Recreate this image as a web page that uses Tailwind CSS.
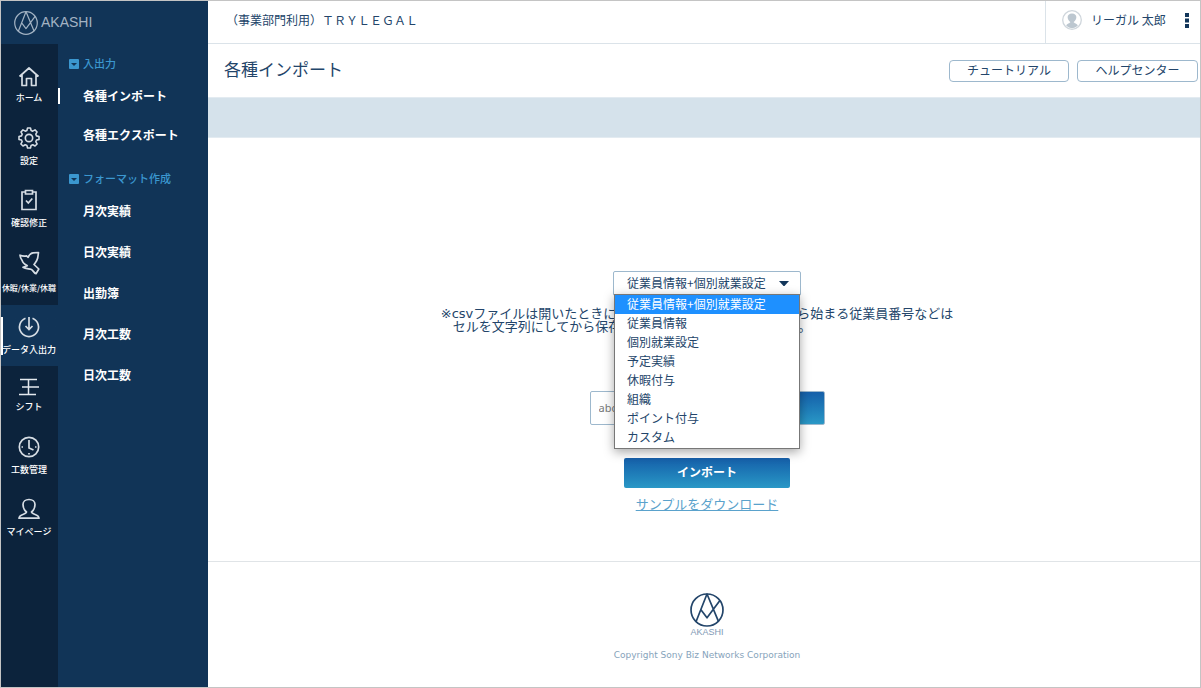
<!DOCTYPE html>
<html lang="ja">
<head>
<meta charset="utf-8">
<meta name="viewport" content="width=device-width, initial-scale=1">
<title>各種インポート - AKASHI</title>
<script src="https://cdn.jsdelivr.net/npm/@tailwindcss/browser@4"></script>
</head>
<body class="min-h-screen flex border border-[#c4c4c4] bg-white font-['Noto_Sans_CJK_JP',sans-serif] text-xs text-[#23456a]">
<svg class="hidden" aria-hidden="true">
  <symbol id="mark" viewBox="0 0 100 100">
    <g fill="none" stroke="currentColor" stroke-width="5" stroke-linejoin="round"><circle cx="50" cy="50" r="47"/><path d="M18 84 50 3l34 81M31 48l19 25 38-51"/></g>
  </symbol>
  <symbol id="caret" viewBox="0 0 10 10"><rect width="10" height="10" rx="1" fill="#3b97cf"/><path d="M2 4h6L5 7z" fill="#113457"/></symbol>
</svg>

<aside class="w-[207px] shrink-0 flex flex-col bg-[#113457] text-white">
  <a href="#" class="h-[43px] pl-[13px] flex items-center gap-[3px] text-[#a3b3c3]">
    <svg class="size-6"><use href="#mark"/></svg>
    <span class="pb-[2px] font-['Liberation_Sans',sans-serif] text-sm">AKASHI</span>
  </a>
  <div class="flex-1 flex">
    <nav aria-label="メイン" class="w-[57px] shrink-0 bg-[#0c233c] pt-[10px] pr-px flex flex-col text-[9px] font-medium leading-[12px] whitespace-nowrap text-center">
      <a href="#" class="h-[61px] pt-3 flex flex-col items-center gap-[4px]">
        <svg class="size-[22px] shrink-0" viewBox="0 0 22 22" fill="none" stroke="#d6dde4" stroke-width="1.700" stroke-linejoin="round"><path d="M1.500 10.500 11 2l9.500 8.500M4 9v10.500h4.500v-7h5v7H18V9"/></svg>ホーム</a>
      <a href="#" class="h-[62px] pt-3 flex flex-col items-center gap-[6px]">
        <svg class="size-[22px] shrink-0" viewBox="0 0 24 24" fill="none" stroke="#d6dde4" stroke-width="1.800" stroke-linejoin="round"><circle cx="12" cy="12" r="4"/><path d="M10.300 1.500h3.400l.7 2.900 1.900.8 2.600-1.500 2.400 2.400-1.500 2.600.8 1.900 2.900.7v3.400l-2.900.7-.8 1.900 1.500 2.600-2.400 2.400-2.600-1.500-1.900.8-.7 2.900h-3.400l-.7-2.900-1.900-.8-2.600 1.500-2.400-2.400 1.500-2.600-.8-1.900-2.900-.7v-3.400l2.900-.7.8-1.900-1.500-2.600 2.400-2.400 2.600 1.500 1.900-.8z" transform="translate(.6 -.4) scale(.95)"/></svg>設定</a>
      <a href="#" class="h-[62px] pt-3 flex flex-col items-center gap-[6px]">
        <svg class="size-[22px] shrink-0" viewBox="0 0 22 22" fill="none" stroke="#d6dde4" stroke-width="1.700"><path d="M7 3H4v17.500h14V3h-3M7.500 1.500h7v3.500h-7zM8 11.500l2.300 2.500 4-4.500"/></svg>確認修正</a>
      <a href="#" class="h-[66px] pt-3 flex flex-col items-center gap-[7px] text-[8px]">
        <svg class="size-6 shrink-0" viewBox="0 0 24 24" fill="none" stroke="#d6dde4" stroke-width="1.700" stroke-linejoin="round"><path d="M3 4.200c2.500 1 4.500 1 6.500.6l1.700 1.500c1-2.500 2.500-4.300 5-4.500l5.300-.3-.8 5.500c-.5 2.500-2 4-3.700 6.500l4.800 4.500-2.800 4.700c-2-.5-2.500-3-4.500-4.200-3-.8-6-.5-8.500-2.200l4.300-1.600C7.500 13 5.500 12 5.300 9.700 4 8 3.200 6.500 3 4.200z"/></svg>休暇/休業/休職</a>
      <a href="#" aria-current="page" class="h-[61px] -mr-px pr-px pt-[10px] flex flex-col items-center gap-[5px] bg-[#113457] bg-linear-to-r from-white from-[2px] to-[#113457] to-[2px] bg-[length:100%_38px] bg-[position:0_12px] bg-no-repeat">
        <svg class="size-6 shrink-0" viewBox="0 0 24 24" fill="none" stroke="#d6dde4" stroke-width="1.700"><path d="M8.500 3.200a9.500 9.500 0 1 0 7 0M12 2v12.500M8.500 11l3.500 3.500 3.500-3.500"/></svg>データ入出力</a>
      <a href="#" class="h-[58px] pt-[10px] flex flex-col items-center gap-[3px]">
        <svg class="size-[22px] shrink-0" viewBox="0 0 22 22" fill="none" stroke="#e4e9ee" stroke-width="1.500"><path d="M2 3.500h17M4 11h17M1 18.500h17M10.500 3.500v15"/></svg>シフト</a>
      <a href="#" class="h-[63px] pt-3 flex flex-col items-center gap-[6px]">
        <svg class="size-[22px] shrink-0" viewBox="0 0 22 22" fill="none" stroke="#d6dde4" stroke-width="1.700"><circle cx="11" cy="11" r="9.700"/><path d="M11 4v8l4.500 2M3.500 11H5m12 0h1.500M11 17v1.500"/></svg>工数管理</a>
      <a href="#" class="h-[62px] pt-[11px] flex flex-col items-center gap-[6px]">
        <svg class="size-[22px] shrink-0" viewBox="0 0 22 22" fill="none" stroke="#d6dde4" stroke-width="1.700" stroke-linejoin="round"><path d="M8.500 14C6 12 5 9.500 5 6.500 5 3.500 7.500 1.500 11 1.500s6 2 6 5c0 3-1 5.500-3.500 7.500 0 2.500 7.500 2 7.500 6.200H1c0-4.200 7.500-3.700 7.500-6.200z"/></svg>マイページ</a>
    </nav>
    <nav aria-label="サブメニュー" class="flex-1 pt-3 font-bold">
      <h2 class="flex items-center gap-1 pl-[11px] h-4 text-[11px] text-[#3b97cf] font-medium"><svg class="size-[10px]"><use href="#caret"/></svg><span class="pb-px">入出力</span></h2>
      <ul class="pt-[5px]">
        <li class="h-[39px] flex items-start"><a href="#" aria-current="page" class="h-[38px] flex items-center before:w-[2px] before:h-4 before:bg-white"><span class="pl-[23px]">各種インポート</span></a></li>
        <li class="h-[38px] flex items-center pl-[25px]"><a href="#">各種エクスポート</a></li>
      </ul>
      <h2 class="mt-[17px] flex items-center gap-1 pl-[11px] h-4 text-[11px] text-[#3b97cf] font-medium"><svg class="size-[10px]"><use href="#caret"/></svg><span class="pb-[2px]">フォーマット作成</span></h2>
      <ul class="pt-[3px] pl-[25px]">
        <li class="h-[41px] flex items-center"><a href="#">月次実績</a></li>
        <li class="h-[41px] flex items-center"><a href="#">日次実績</a></li>
        <li class="h-[41px] flex items-center"><a href="#">出勤簿</a></li>
        <li class="h-[41px] flex items-center"><a href="#">月次工数</a></li>
        <li class="h-[41px] flex items-center"><a href="#">日次工数</a></li>
      </ul>
    </nav>
  </div>
</aside>

<div class="flex-1 flex flex-col min-w-0">
  <header class="h-[43px] flex items-stretch border-b border-[#dbe3e9]">
    <p class="flex-1 pl-[18px] pb-[5px] flex items-center">（事業部門利用）ＴＲＹＬＥＧＡＬ</p>
    <div class="w-[155px] pl-4 flex items-center border-l border-[#dbe3e9]">
      <svg class="size-5 mb-1" viewBox="0 0 20 20"><circle cx="10" cy="10" r="9.300" fill="#fff" stroke="#cfd6dc" stroke-width="1.300"/><path d="M8.300 12C4.500 9.500 4.500 3.500 10 3.500s5.500 6 1.700 8.500c0 1.300 4 1.500 4 3.800a8 8 0 0 1-11.400 0c0-2.300 4-2.500 4-3.800z" fill="#bcc7d0"/></svg>
      <span class="ml-[9px] pb-[5px]">リーガル 太郎</span>
      <button aria-label="メニュー" class="ml-auto mr-[11px] mb-1"><svg class="w-1 h-4" viewBox="0 0 4 16" fill="#12365a"><path d="M0 1h4v4H0zM0 6.500h4v4H0zM0 12h4v4H0z"/></svg></button>
    </div>
  </header>
  <div class="h-[53px] pl-4 pr-[2px] flex items-center gap-2">
    <h1 class="flex-1 pb-[2px] text-[17px]">各種インポート</h1>
    <button class="w-[120px] h-[22px] pb-[2px] border border-[#9db8cd] rounded leading-[18px]">チュートリアル</button>
    <button class="w-[121px] h-[22px] pb-[2px] border border-[#9db8cd] rounded leading-[18px]">ヘルプセンター</button>
  </div>
  <div class="h-[41px] bg-[#d5e2eb] border-y border-[#e3ebf1]"></div>

  <main class="flex-1 pt-[133px] pl-[6px]">
    <form class="flex flex-col items-center">
      <div class="relative w-[188px]">
        <label for="kind" class="sr-only">種別</label>
        <select id="kind" class="appearance-none block w-full h-[25px] pl-[13px] pb-px border border-[#9db8cd] rounded-xs bg-white">
          <option>従業員情報+個別就業設定</option>
        </select>
        <svg class="absolute right-3 top-[10px] w-[10px] h-[5px]" viewBox="0 0 10 5"><path d="M0 0h10L5.500 5h-1z" fill="#12365a"/></svg>
        <ul role="listbox" aria-label="インポート種別の候補" class="absolute z-10 left-px right-px top-[23px] pb-px border border-[#777] bg-white shadow-[0_3px_10px_rgb(0_0_0/0.35)] leading-[18px] *:h-[19px] *:pl-3">
          <li role="option" aria-selected="true" class="bg-[#1e90ff] text-white">従業員情報+個別就業設定</li>
          <li role="option">従業員情報</li>
          <li role="option">個別就業設定</li>
          <li role="option">予定実績</li>
          <li role="option">休暇付与</li>
          <li role="option">組織</li>
          <li role="option">ポイント付与</li>
          <li role="option">カスタム</li>
        </ul>
      </div>
      <p class="mt-[11px] mr-5 pl-3 -indent-3 font-['DejaVu_Sans','Noto_Sans_CJK_JP',sans-serif] text-[13px] leading-[13px] whitespace-nowrap">※csvファイルは開いたときに先頭の文字が消えるため、 0から始まる従業員番号などは<br><span class="inline-block indent-0">セルを文字列にしてから保存しcsvインポートしてください。</span></p>
      <div class="mt-[58px] flex w-[235px] h-[34px]">
        <input aria-label="ファイル名" value="abc.csv" class="flex-1 min-w-0 pl-2 border border-[#9db8cd] rounded-l-xs font-['Noto_Sans',sans-serif] text-[11px] text-[#777]">
        <button type="button" aria-label="参照" class="w-[90px] border border-[#9db8cd] rounded-r-xs bg-linear-to-b from-[#165fa9] to-[#2a98c6]"></button>
      </div>
      <button type="button" class="mt-[33px] w-[166px] h-[30px] pb-[3px] rounded-xs bg-linear-to-b from-[#165fa9] to-[#2a98c6] font-bold text-white">インポート</button>
      <a href="#" class="mt-[6px] text-[13px] leading-[19px] text-[#5aa2cc] underline">サンプルをダウンロード</a>
    </form>
  </main>
  <footer class="h-[126px] pl-[6px] pt-[31px] border-t border-[#e0e4e7] flex flex-col items-center">
    <svg class="size-[34px]"><use href="#mark"/></svg>
    <span class="font-['Liberation_Sans',sans-serif] text-[9px] leading-[10px] text-[#7f9ab5]">AKASHI</span>
    <small class="mt-[12px] font-['DejaVu_Sans',sans-serif] text-[9px] leading-[12px] text-[#86a3bb]">Copyright Sony Biz Networks Corporation</small>
  </footer>
</div>
</body>
</html>
